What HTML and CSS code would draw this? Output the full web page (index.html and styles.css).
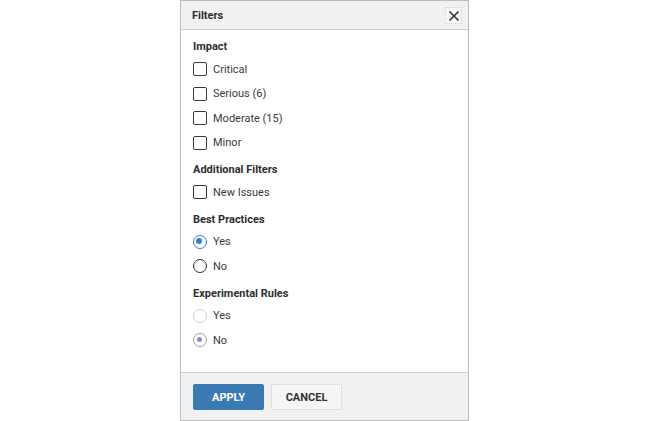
FILE: index.html
```html
<!DOCTYPE html>
<html>
<head>
<meta charset="utf-8">
<link rel="stylesheet" href="styles.css">
</head>
<body>
<div class="page">
  <div class="dialog">
    <div class="header">
      <span class="title">Filters</span>
      <button class="close" aria-label="Close">
        <svg width="12" height="12" viewBox="0 0 12 12"><path d="M1.5 1.5 L10.5 10.5 M10.5 1.5 L1.5 10.5" stroke="#333" stroke-width="1.6" fill="none"/></svg>
      </button>
    </div>
    <div class="body">
      <div class="section">
        <div class="heading">Impact</div>
        <div class="row"><span class="box"></span><span class="label">Critical</span></div>
        <div class="row"><span class="box"></span><span class="label">Serious (6)</span></div>
        <div class="row"><span class="box"></span><span class="label">Moderate (15)</span></div>
        <div class="row"><span class="box"></span><span class="label">Minor</span></div>
      </div>
      <div class="section">
        <div class="heading">Additional Filters</div>
        <div class="row"><span class="box"></span><span class="label">New Issues</span></div>
      </div>
      <div class="section">
        <div class="heading">Best Practices</div>
        <div class="row"><span class="radio checked"></span><span class="label">Yes</span></div>
        <div class="row"><span class="radio"></span><span class="label">No</span></div>
      </div>
      <div class="section">
        <div class="heading">Experimental Rules</div>
        <div class="row"><span class="radio disabled"></span><span class="label">Yes</span></div>
        <div class="row"><span class="radio disabled-checked"></span><span class="label">No</span></div>
      </div>
    </div>
    <div class="footer">
      <button class="btn apply">APPLY</button>
      <button class="btn cancel">CANCEL</button>
    </div>
  </div>
</div>
</body>
</html>
```

FILE: styles.css
```css
html, body {
  margin: 0;
  padding: 0;
  background: #ffffff;
}
body {
  font-family: Roboto, "Liberation Sans", Arial, sans-serif;
  font-size: 11px;
  color: #3a3a3a;
}
.page {
  width: 650px;
  height: 421px;
  display: flex;
  justify-content: flex-start;
  padding-left: 180px;
  box-sizing: border-box;
}
.dialog {
  width: 289px;
  height: 421px;
  box-sizing: border-box;
  border: 1px solid #bdbdbd;
  display: flex;
  flex-direction: column;
  background: #fff;
}
.header {
  height: 29px;
  box-sizing: border-box;
  background: #f1f1f1;
  border-bottom: 1px solid #d0d0d0;
  display: flex;
  align-items: center;
  justify-content: space-between;
  padding: 0 6px 0 11px;
}
.title {
  font-weight: bold;
  color: #2e2e2e;
  font-size: 11px;
}
.close {
  width: 17px;
  height: 17px;
  padding: 0;
  margin-top: 1px;
  border: 1px dotted #cfcfcf;
  background: #f6f6f6;
  display: flex;
  align-items: center;
  justify-content: center;
}
.body {
  flex: 1;
  padding: 10px 12px 0 12px;
  background-color: #fff;
  background-image: radial-gradient(#e9e9e9 0.6px, transparent 0.7px);
  background-size: 6px 6px;
}
.section {
  margin-bottom: 8px;
}
.heading {
  font-weight: bold;
  color: #2e2e2e;
  height: 14px;
  line-height: 14px;
  margin-bottom: 3px;
}
.row {
  height: 24.5px;
  display: flex;
  align-items: center;
}
.label {
  margin-left: 6px;
  color: #3a3a3a;
}
.box {
  width: 14px;
  height: 14px;
  box-sizing: border-box;
  border: 1.6px solid #3a3a3a;
  border-radius: 2px;
  background: #fff;
}
.radio {
  width: 14px;
  height: 14px;
  box-sizing: border-box;
  border: 1.7px solid #2b2b2b;
  border-radius: 50%;
  background: #fff;
  position: relative;
}
.radio.checked {
  border-color: #3a7bc6;
}
.radio.checked::after {
  content: "";
  position: absolute;
  left: 2.3px;
  top: 2.3px;
  width: 6px;
  height: 6px;
  border-radius: 50%;
  background: #3a7bc6;
}
.radio.disabled {
  border-color: #cfcfcf;
}
.radio.disabled-checked {
  border-color: #a3a3a3;
}
.radio.disabled-checked::after {
  content: "";
  position: absolute;
  left: 2.8px;
  top: 2.8px;
  width: 5px;
  height: 5px;
  border-radius: 50%;
  background: #7d95b3;
}
.footer {
  height: 48px;
  box-sizing: border-box;
  background: #f1f1f1;
  border-top: 1px solid #d0d0d0;
  display: flex;
  align-items: flex-start;
  gap: 7px;
  padding: 11px 12px 0 12px;
}
.btn {
  width: 71px;
  height: 26px;
  font-family: Roboto, "Liberation Sans", Arial, sans-serif;
  font-size: 11px;
  font-weight: bold;
  border-radius: 2px;
  padding: 0;
}
.apply {
  background: #3b79b3;
  color: #fff;
  border: 1px solid #3b79b3;
}
.cancel {
  background: #f5f5f5;
  color: #333;
  border: 1px dotted #c8c8c8;
}
```
